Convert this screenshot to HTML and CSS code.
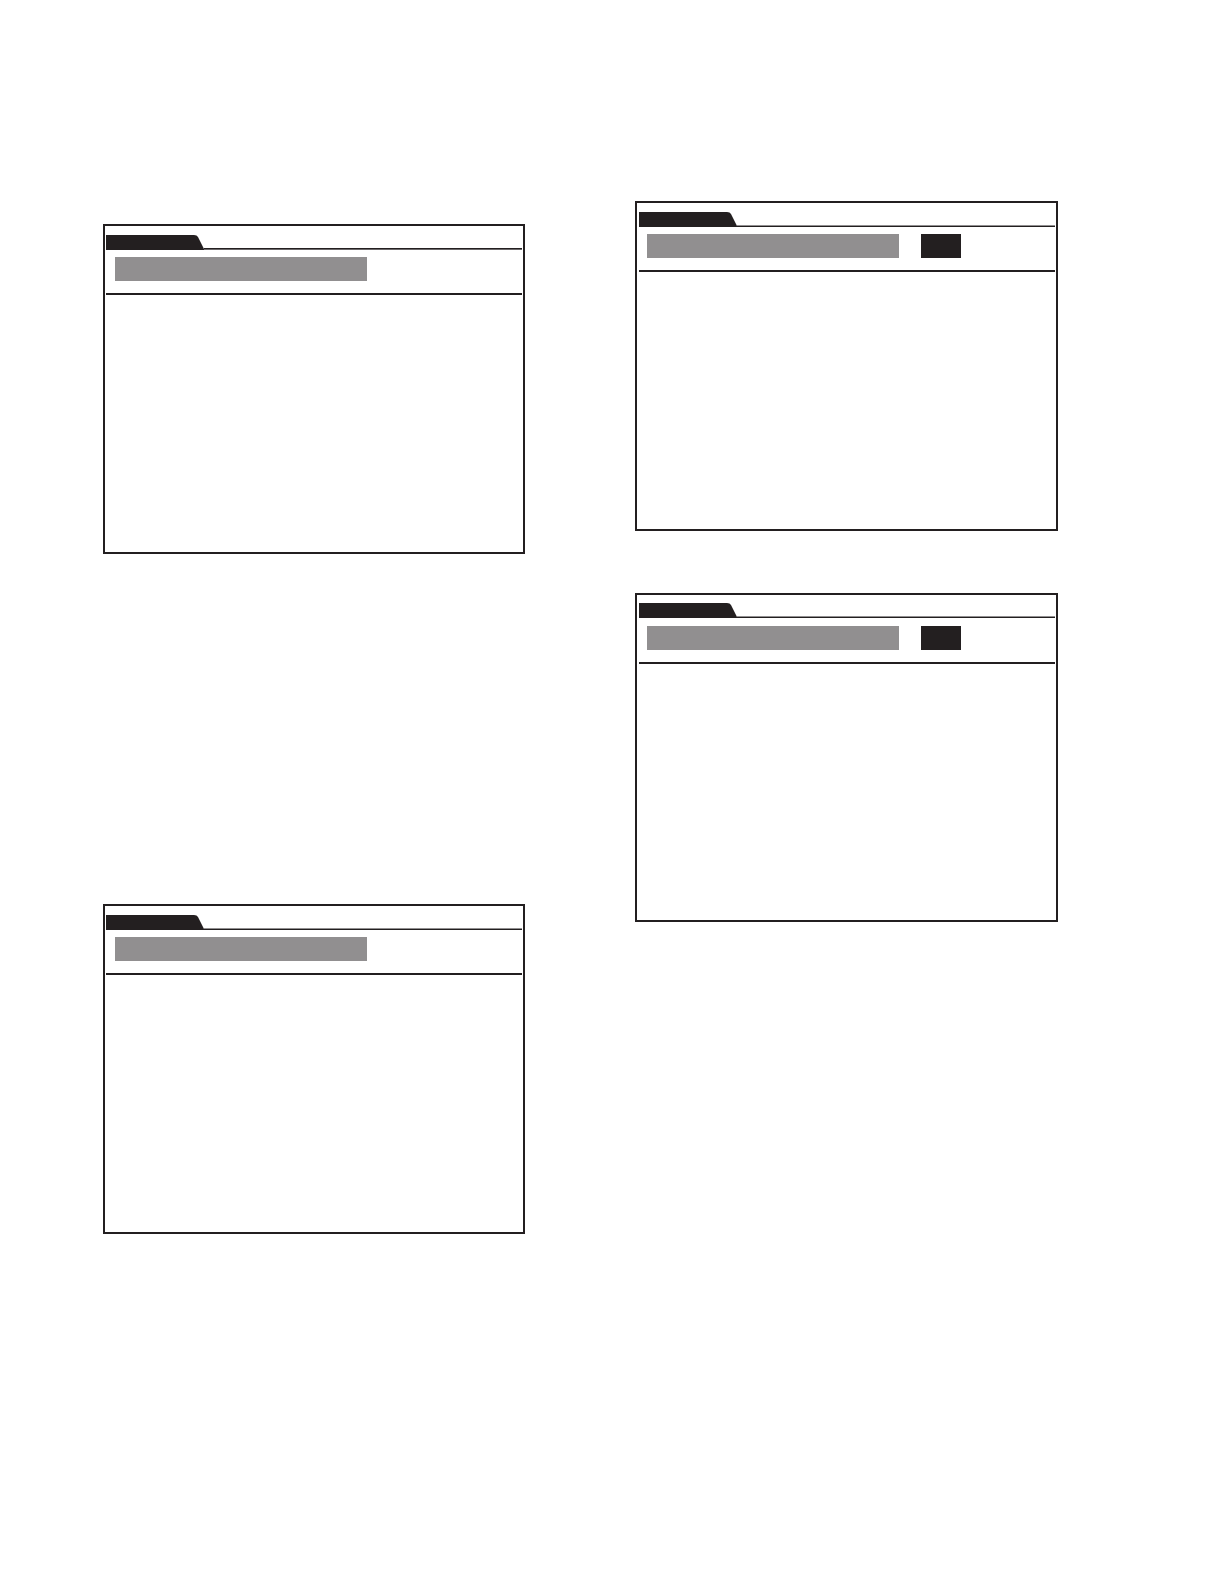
FILE: index.html
```
<!DOCTYPE html>
<html lang="en">
<head>
<meta charset="utf-8">
<meta name="viewport" content="width=device-width, initial-scale=1">
<title>Display panels</title>
<link rel="stylesheet" href="styles.css">
</head>
<body>
<main class="page">
  <div class="column column-left">
    <section class="panel">
      <div class="tab-row tab-row-dark-top">
        <svg class="tab" viewBox="0 0 98 15" aria-hidden="true"><path d="M0 0H88Q91 0 92 2L98 14V15H0Z"/></svg>
        <div class="tab-line"></div>
      </div>
      <div class="toolbar"><div class="field"></div></div>
    </section>
    <section class="panel">
      <div class="tab-row">
        <svg class="tab" viewBox="0 0 98 15" aria-hidden="true"><path d="M0 0H88Q91 0 92 2L98 14V15H0Z"/></svg>
        <div class="tab-line"></div>
      </div>
      <div class="toolbar"><div class="field"></div></div>
    </section>
  </div>
  <div class="column column-right">
    <section class="panel">
      <div class="tab-row">
        <svg class="tab" viewBox="0 0 98 15" aria-hidden="true"><path d="M0 0H88Q91 0 92 2L98 14V15H0Z"/></svg>
        <div class="tab-line"></div>
      </div>
      <div class="toolbar"><div class="field"></div><div class="marker"></div></div>
    </section>
    <section class="panel panel-short">
      <div class="tab-row">
        <svg class="tab" viewBox="0 0 98 15" aria-hidden="true"><path d="M0 0H88Q91 0 92 2L98 14V15H0Z"/></svg>
        <div class="tab-line"></div>
      </div>
      <div class="toolbar"><div class="field"></div><div class="marker"></div></div>
    </section>
  </div>
</main>
</body>
</html>
```
FILE: styles.css
```
:root {
  --ink: #231f20;
  --grey: #918f90;
}

* {
  box-sizing: border-box;
}

body {
  margin: 0;
  background: #fff;
  font-family: "Liberation Sans", sans-serif;
}

.page {
  display: grid;
  grid-template-columns: minmax(0, 422fr) minmax(0, 423fr);
  column-gap: 110px;
  min-height: 100vh;
  padding: 0 161px 0 103px;
}

.column {
  display: flex;
  flex-direction: column;
}

.column-left {
  gap: 350px;
  padding-top: 224px;
}

.column-right {
  gap: 62px;
  padding-top: 201px;
}

.panel {
  min-height: 330px;
  padding: 9px 1px 0;
  border: 2px solid var(--ink);
}

.column-right .panel {
  padding-left: 2px;
}

.tab-row {
  display: flex;
  align-items: flex-end;
}

.tab {
  flex: none;
  width: 98px;
  height: 15px;
  fill: var(--ink);
}

.tab-line {
  flex: 1;
  height: 2px;
  border-top: 1px solid var(--grey);
  border-bottom: 1px solid var(--ink);
}

.tab-row-dark-top .tab-line {
  border-top-color: var(--ink);
  border-bottom-color: #6b686a;
}

.toolbar {
  display: flex;
  gap: 22px;
  padding: 7px 9px 12px;
  border-bottom: 2px solid var(--ink);
}

.column-right .toolbar {
  padding-left: 8px;
}

.field {
  flex: 0 1 252px;
  height: 24px;
  background: var(--grey);
}

.marker {
  flex: 0 1 40px;
  height: 24px;
  background: var(--ink);
}

.panel-short {
  min-height: 329px;
  padding-top: 8px;
}

.panel-short .toolbar {
  padding-top: 8px;
}
```
